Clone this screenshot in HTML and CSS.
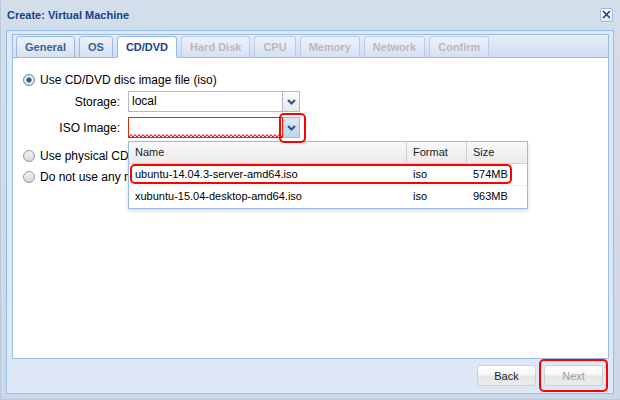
FILE: index.html
```html
<!DOCTYPE html>
<html lang="en">
<head>
    <meta charset="UTF-8">
    <title>Create: Virtual Machine</title>
    <link rel="stylesheet" href="styles.css">
</head>
<body>
    <div class="window">
        <div class="title-bar">
            <span class="title">Create: Virtual Machine</span>
            <span class="close-btn">
                <svg width="9" height="9" viewBox="0 0 9 9"><path d="M1 1 L8 8 M8 1 L1 8" stroke="#15428b" stroke-width="1.6" fill="none"/></svg>
            </span>
        </div>

        <div class="window-body">
            <div class="tab-panel">
                <div class="tab-strip">
                    <span class="tab">General</span>
                    <span class="tab">OS</span>
                    <span class="tab active">CD/DVD</span>
                    <span class="tab disabled">Hard Disk</span>
                    <span class="tab disabled">CPU</span>
                    <span class="tab disabled">Memory</span>
                    <span class="tab disabled">Network</span>
                    <span class="tab disabled">Confirm</span>
                </div>

                <div class="tab-body">
                    <div class="radio-row">
                        <span class="radio checked"></span>Use CD/DVD disc image file (iso)
                    </div>

                    <div class="field-row">
                        <label class="field-label">Storage:</label>
                        <div class="combo">
                            <div class="combo-input">local</div>
                            <div class="combo-trigger">
                                <svg width="9" height="6" viewBox="0 0 9 6"><path d="M1 1 L4.5 4.5 L8 1" stroke="#2f4f82" stroke-width="2" fill="none"/></svg>
                            </div>
                        </div>
                    </div>

                    <div class="field-row iso-row">
                        <label class="field-label">ISO Image:</label>
                        <div class="combo invalid">
                            <div class="combo-input">
                                <svg class="squiggle" width="100%" height="3">
                                    <defs>
                                        <pattern id="zig" width="4" height="3" patternUnits="userSpaceOnUse">
                                            <path d="M0 3 L2 0.5 L4 3" stroke="#e00000" stroke-width="1" fill="none"/>
                                        </pattern>
                                    </defs>
                                    <rect width="100%" height="3" fill="url(#zig)"/>
                                </svg>
                            </div>
                            <div class="combo-trigger focus mark-trigger">
                                <svg width="9" height="6" viewBox="0 0 9 6"><path d="M1 1 L4.5 4.5 L8 1" stroke="#2f4f82" stroke-width="2" fill="none"/></svg>
                            </div>

                            <!-- open list, lies over the radios below -->
                            <div class="dropdown">
                                <div class="grid-row grid-head">
                                    <span>Name</span>
                                    <span>Format</span>
                                    <span>Size</span>
                                </div>
                                <div class="grid-row mark-row">
                                    <span>ubuntu-14.04.3-server-amd64.iso</span>
                                    <span>iso</span>
                                    <span>574MB</span>
                                </div>
                                <div class="grid-row">
                                    <span>xubuntu-15.04-desktop-amd64.iso</span>
                                    <span>iso</span>
                                    <span>963MB</span>
                                </div>
                            </div>
                        </div>
                    </div>

                    <div class="radio-row physical">
                        <span class="radio"></span>Use physical CD/DVD drive
                    </div>
                    <div class="radio-row">
                        <span class="radio"></span>Do not use any media
                    </div>
                </div>
            </div>

            <div class="footer">
                <button class="btn">Back</button>
                <button class="btn disabled mark-next">Next</button>
            </div>
        </div>
    </div>
</body>
</html>
```

FILE: styles.css
```css
body {
    margin: 0;
    font-family: "Liberation Sans", Arial, sans-serif;
    font-size: 12px;
    color: #000;
    background: #fff;
}
.window {
    width: 620px;
    height: 400px;
    box-sizing: border-box;
    padding: 0 6px 5px 5px;
    display: flex;
    flex-direction: column;
    background: linear-gradient(#d3deeb, #cbd8e8);
    border-left: 1px solid #b9c8da;
    border-bottom: 1px solid #b9c8da;
}
.title-bar {
    height: 29px;
    flex: none;
    display: flex;
    align-items: center;
    justify-content: space-between;
    padding: 0 1px 1px 1px;
}
.title {
    font-size: 11px;
    font-weight: bold;
    color: #15428b;
}
.close-btn {
    width: 13px;
    height: 14px;
    box-sizing: border-box;
    border: 1px solid #99bbe8;
    border-radius: 2px;
    background: linear-gradient(#ffffff, #e3ecf8);
    display: flex;
    align-items: center;
    justify-content: center;
}
.window-body {
    flex: 1;
    display: flex;
    flex-direction: column;
    border: 1px solid #99bbe8;
    background: #dfe8f6;
    padding: 3px 4px 0 5px;
    min-height: 0;
}
.tab-panel {
    flex: 1;
    display: flex;
    flex-direction: column;
}
.tab-strip {
    height: 24px;
    box-sizing: border-box;
    border: 1px solid #99bbe8;
    background: linear-gradient(#e6eef8, #cfddf0);
    display: flex;
    align-items: flex-end;
    gap: 4px;
    padding-left: 3px;
}
.tab {
    height: 22px;
    box-sizing: border-box;
    margin-bottom: -1px;
    padding: 0 8px;
    border: 1px solid #99bbe8;
    border-radius: 3px 3px 0 0;
    background: linear-gradient(#eef3fa, #d4e1f3);
    font-size: 11px;
    font-weight: bold;
    line-height: 20px;
    color: #3e5f93;
}
.tab.active {
    background: linear-gradient(#ffffff, #ffffff 60%, #f9fbfe);
    border-bottom-color: #fff;
    color: #15428b;
}
.tab.disabled {
    color: #bdb8b8;
    border-color: #b7cdec;
    border-bottom-color: #99bbe8;
}
.tab-body {
    flex: 1;
    background: #fff;
    border: 1px solid #99bbe8;
    border-top: 0;
    padding: 12px 10px 0 10px;
}
.radio-row {
    height: 20px;
    display: flex;
    align-items: center;
    white-space: nowrap;
}
.radio {
    width: 12px;
    height: 12px;
    flex: none;
    box-sizing: border-box;
    border-radius: 50%;
    border: 1px solid #8d9aab;
    background: linear-gradient(#f4f4f4, #d6d6d6);
    margin-right: 5px;
}
.radio.checked {
    border-color: #6f8299;
    background: radial-gradient(circle, #2d4c74 0, #3f6592 2.3px, #eef2f7 3px, #cdd6e0 6px);
}
.field-row {
    height: 21px;
    margin-top: 1px;
    display: flex;
    align-items: center;
}
.iso-row {
    margin-top: 5px;
    position: relative;
    z-index: 5;
}
.physical {
    margin-top: 8px;
}
.physical + .radio-row {
    margin-top: 1px;
}
.field-label {
    width: 105px;
    box-sizing: border-box;
    padding-right: 8px;
    text-align: right;
}
.combo {
    width: 172px;
    height: 21px;
    display: flex;
    position: relative;
}
.combo-input {
    flex: 1;
    box-sizing: border-box;
    border: 1px solid #b5b8c8;
    background: #fff;
    padding: 0 3px;
    line-height: 19px;
}
.invalid .combo-input {
    border-color: #cc3300;
    padding: 0;
    display: flex;
    align-items: flex-end;
}
.squiggle {
    display: block;
}
.combo-trigger {
    width: 17px;
    box-sizing: border-box;
    border: 1px solid #b5b8c8;
    border-left: 0;
    background: linear-gradient(#fdfdfd, #e6e8ec);
    display: flex;
    align-items: center;
    justify-content: center;
}
.combo-trigger.focus {
    border: 1px solid #99bbe8;
    background: linear-gradient(#dce8f8, #bdd3f0);
}
.dropdown {
    position: absolute;
    left: 0;
    top: 24px;
    width: 400px;
    box-sizing: border-box;
    border: 1px solid #99bbe8;
    background: #fff;
    box-shadow: 0 2px 4px rgba(0, 0, 0, 0.15);
    z-index: 10;
    font-size: 11px;
}
.grid-row {
    display: grid;
    grid-template-columns: 278px 60px 60px;
    height: 22px;
    box-sizing: border-box;
    border-bottom: 1px solid #ededed;
    line-height: 21px;
}
.grid-row:last-child {
    border-bottom: 0;
}
.grid-row span {
    padding-left: 6px;
    white-space: nowrap;
}
.grid-head {
    background: linear-gradient(#f9f9f9, #ebebeb);
    border-bottom: 1px solid #d0d0d0;
    color: #222;
}
.grid-head span:not(:last-child) {
    border-right: 1px solid #d0d0d0;
}
.footer {
    height: 34px;
    flex: none;
    box-sizing: border-box;
    display: flex;
    justify-content: flex-end;
    align-items: flex-start;
    gap: 8px;
    padding: 6px 6px 0 0;
}
.btn {
    width: 59px;
    height: 21px;
    padding: 0;
    border: 1px solid #d0d0d0;
    border-radius: 3px;
    background: linear-gradient(#ffffff 0%, #f6f6f6 48%, #e6e6e6 52%, #ececec 100%);
    font-family: "Liberation Sans", Arial, sans-serif;
    font-size: 11px;
    color: #222;
}
.btn.disabled {
    color: #9c9c9c;
}

/* red highlight marks */
.mark-trigger,
.mark-row,
.mark-next {
    position: relative;
}
.mark-trigger::after,
.mark-row::after,
.mark-next::after {
    content: "";
    position: absolute;
    border: 2px solid #f00;
    border-radius: 5px;
    z-index: 20;
}
.mark-trigger::after {
    top: -5px;
    left: -5px;
    right: -7px;
    bottom: -6px;
}
.mark-row::after {
    top: 0;
    left: 1px;
    width: 382px;
    height: 20px;
    box-sizing: border-box;
}
.mark-next::after {
    top: -7px;
    left: -6px;
    right: -6px;
    bottom: -7px;
}
```
